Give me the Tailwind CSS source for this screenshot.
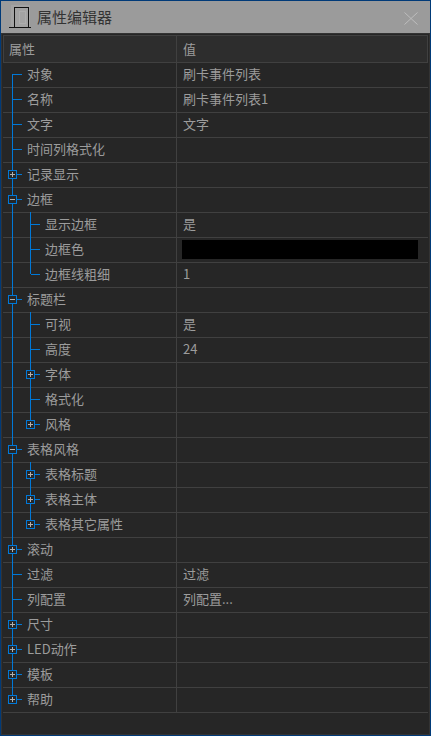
<!DOCTYPE html>
<html lang="zh-CN">
<head>
    <meta charset="UTF-8">
    <title>属性编辑器</title>
    <script src="https://cdn.jsdelivr.net/npm/@tailwindcss/browser@4"></script>
</head>
<body class="bg-[#262626] overflow-hidden">
    <div class="w-[431px] h-[736px] border border-[#003a78] flex flex-col text-[13px] text-[#9c9c9c] font-['Noto_Sans_CJK_SC','Liberation_Sans',sans-serif]">
        <header class="h-[32px] shrink-0 bg-[#9b9b9b] flex items-center justify-between pl-[8px] pr-[12px]">
            <div class="flex items-center gap-[4px]">
                <svg width="24" height="24" viewBox="0 0 24 24" fill="none" shape-rendering="crispEdges">
                    <rect x="2" y="0" width="19" height="22" fill="#a3a3a3"/>
                    <rect x="10.5" y="6.5" width="6" height="12" stroke="#adadad"/>
                    <path d="M5.5 22V2.5H19.5V22" stroke="#111"/>
                    <path d="M0 22.5H22" stroke="#111"/>
                </svg>
                <span class="text-[15px] text-[#333]">属性编辑器</span>
            </div>
            <svg class="mt-[3px]" width="14" height="13" viewBox="0 0 14 13" fill="none"><path d="M0.5 0.5L13.5 12.5M13.5 0.5L0.5 12.5" stroke="#bdbdbd"/></svg>
        </header>

        <main class="relative flex-1 bg-[#262626] border border-[#333] pl-[1px] pr-[1px] pt-[1px]">
            <div class="flex h-[28px] bg-[#2d2d2d] border border-[#404040] items-center">
                <div class="w-[173px] h-full border-r border-[#404040] pl-[5px] flex items-center">属性</div>
                <div class="flex-1 pl-[6px]">值</div>
            </div>

            <div class="flex flex-col">
                <div class="flex h-[25px] border-b border-[#404040]"><div class="w-[174px] border-r border-[#404040] pl-[24px] pb-[2px] flex items-center">对象</div><div class="flex-1 pl-[6px] pb-[2px] flex items-center">刷卡事件列表</div></div>
                <div class="flex h-[25px] border-b border-[#404040]"><div class="w-[174px] border-r border-[#404040] pl-[24px] pb-[2px] flex items-center">名称</div><div class="flex-1 pl-[6px] pb-[2px] flex items-center">刷卡事件列表1</div></div>
                <div class="flex h-[25px] border-b border-[#404040]"><div class="w-[174px] border-r border-[#404040] pl-[24px] pb-[2px] flex items-center">文字</div><div class="flex-1 pl-[6px] pb-[2px] flex items-center">文字</div></div>
                <div class="flex h-[25px] border-b border-[#404040]"><div class="w-[174px] border-r border-[#404040] pl-[24px] pb-[2px] flex items-center">时间列格式化</div><div class="flex-1"></div></div>
                <div class="flex h-[25px] border-b border-[#404040]"><div class="w-[174px] border-r border-[#404040] pl-[24px] pb-[2px] flex items-center">记录显示</div><div class="flex-1"></div></div>
                <div class="flex h-[25px] border-b border-[#404040]"><div class="w-[174px] border-r border-[#404040] pl-[24px] pb-[2px] flex items-center">边框</div><div class="flex-1"></div></div>
                <div class="flex h-[25px] border-b border-[#404040]"><div class="w-[174px] border-r border-[#404040] pl-[42px] pb-[2px] flex items-center">显示边框</div><div class="flex-1 pl-[6px] pb-[2px] flex items-center">是</div></div>
                <div class="flex h-[25px] border-b border-[#404040]"><div class="w-[174px] border-r border-[#404040] pl-[42px] pb-[2px] flex items-center">边框色</div><div class="flex-1 pl-[5px] pr-[10px] pb-[2px] flex items-center"><div class="w-full h-[19px] bg-black"></div></div></div>
                <div class="flex h-[25px] border-b border-[#404040]"><div class="w-[174px] border-r border-[#404040] pl-[42px] pb-[2px] flex items-center">边框线粗细</div><div class="flex-1 pl-[6px] pb-[2px] flex items-center">1</div></div>
                <div class="flex h-[25px] border-b border-[#404040]"><div class="w-[174px] border-r border-[#404040] pl-[24px] pb-[2px] flex items-center">标题栏</div><div class="flex-1"></div></div>
                <div class="flex h-[25px] border-b border-[#404040]"><div class="w-[174px] border-r border-[#404040] pl-[42px] pb-[2px] flex items-center">可视</div><div class="flex-1 pl-[6px] pb-[2px] flex items-center">是</div></div>
                <div class="flex h-[25px] border-b border-[#404040]"><div class="w-[174px] border-r border-[#404040] pl-[42px] pb-[2px] flex items-center">高度</div><div class="flex-1 pl-[6px] pb-[2px] flex items-center">24</div></div>
                <div class="flex h-[25px] border-b border-[#404040]"><div class="w-[174px] border-r border-[#404040] pl-[42px] pb-[2px] flex items-center">字体</div><div class="flex-1"></div></div>
                <div class="flex h-[25px] border-b border-[#404040]"><div class="w-[174px] border-r border-[#404040] pl-[42px] pb-[2px] flex items-center">格式化</div><div class="flex-1"></div></div>
                <div class="flex h-[25px] border-b border-[#404040]"><div class="w-[174px] border-r border-[#404040] pl-[42px] pb-[2px] flex items-center">风格</div><div class="flex-1"></div></div>
                <div class="flex h-[25px] border-b border-[#404040]"><div class="w-[174px] border-r border-[#404040] pl-[24px] pb-[2px] flex items-center">表格风格</div><div class="flex-1"></div></div>
                <div class="flex h-[25px] border-b border-[#404040]"><div class="w-[174px] border-r border-[#404040] pl-[42px] pb-[2px] flex items-center">表格标题</div><div class="flex-1"></div></div>
                <div class="flex h-[25px] border-b border-[#404040]"><div class="w-[174px] border-r border-[#404040] pl-[42px] pb-[2px] flex items-center">表格主体</div><div class="flex-1"></div></div>
                <div class="flex h-[25px] border-b border-[#404040]"><div class="w-[174px] border-r border-[#404040] pl-[42px] pb-[2px] flex items-center">表格其它属性</div><div class="flex-1"></div></div>
                <div class="flex h-[25px] border-b border-[#404040]"><div class="w-[174px] border-r border-[#404040] pl-[24px] pb-[2px] flex items-center">滚动</div><div class="flex-1"></div></div>
                <div class="flex h-[25px] border-b border-[#404040]"><div class="w-[174px] border-r border-[#404040] pl-[24px] pb-[2px] flex items-center">过滤</div><div class="flex-1 pl-[6px] pb-[2px] flex items-center">过滤</div></div>
                <div class="flex h-[25px] border-b border-[#404040]"><div class="w-[174px] border-r border-[#404040] pl-[24px] pb-[2px] flex items-center">列配置</div><div class="flex-1 pl-[6px] pb-[2px] flex items-center">列配置...</div></div>
                <div class="flex h-[25px] border-b border-[#404040]"><div class="w-[174px] border-r border-[#404040] pl-[24px] pb-[2px] flex items-center">尺寸</div><div class="flex-1"></div></div>
                <div class="flex h-[25px] border-b border-[#404040]"><div class="w-[174px] border-r border-[#404040] pl-[24px] pb-[2px] flex items-center">LED动作</div><div class="flex-1"></div></div>
                <div class="flex h-[25px] border-b border-[#404040]"><div class="w-[174px] border-r border-[#404040] pl-[24px] pb-[2px] flex items-center">模板</div><div class="flex-1"></div></div>
                <div class="flex h-[25px] border-b border-[#404040]"><div class="w-[174px] border-r border-[#404040] pl-[24px] pb-[2px] flex items-center">帮助</div><div class="flex-1"></div></div>
            </div>

            <!-- tree guide lines over the name column -->
            <svg class="absolute left-0 top-0 pointer-events-none" width="60" height="700" viewBox="2 35 60 700" fill="none" shape-rendering="crispEdges">
                <g stroke="#0078d7">
                    <path d="M12.5 75V700M12.5 75.5H22M12.5 100.5H22M12.5 125.5H22M12.5 150.5H22M12.5 175.5H22M12.5 200.5H22M12.5 300.5H22M12.5 450.5H22M12.5 550.5H22M12.5 575.5H22M12.5 600.5H22M12.5 625.5H22M12.5 650.5H22M12.5 675.5H22M12.5 700.5H22"/>
                    <path d="M30.5 213V275M30.5 225.5H40M30.5 250.5H40M30.5 275.5H40"/>
                    <path d="M30.5 313V425M30.5 325.5H40M30.5 350.5H40M30.5 375.5H40M30.5 400.5H40M30.5 425.5H40"/>
                    <path d="M30.5 463V525M30.5 475.5H40M30.5 500.5H40M30.5 525.5H40"/>
                </g>
                <g stroke="#0078d7" fill="#262626">
                    <rect x="8.5" y="171.5" width="8" height="8"/>
                    <rect x="8.5" y="196.5" width="8" height="8"/>
                    <rect x="8.5" y="296.5" width="8" height="8"/>
                    <rect x="8.5" y="446.5" width="8" height="8"/>
                    <rect x="8.5" y="546.5" width="8" height="8"/>
                    <rect x="8.5" y="621.5" width="8" height="8"/>
                    <rect x="8.5" y="646.5" width="8" height="8"/>
                    <rect x="8.5" y="671.5" width="8" height="8"/>
                    <rect x="8.5" y="696.5" width="8" height="8"/>
                    <rect x="26.5" y="371.5" width="8" height="8"/>
                    <rect x="26.5" y="421.5" width="8" height="8"/>
                    <rect x="26.5" y="471.5" width="8" height="8"/>
                    <rect x="26.5" y="496.5" width="8" height="8"/>
                    <rect x="26.5" y="521.5" width="8" height="8"/>
                </g>
                <path stroke="#b0b0b0" d="M10 175.5H15M12.5 173V178M10 200.5H15M10 300.5H15M10 450.5H15M10 550.5H15M12.5 548V553M10 625.5H15M12.5 623V628M10 650.5H15M12.5 648V653M10 675.5H15M12.5 673V678M10 700.5H15M12.5 698V703M28 375.5H33M30.5 373V378M28 425.5H33M30.5 423V428M28 475.5H33M30.5 473V478M28 500.5H33M30.5 498V503M28 525.5H33M30.5 523V528"/>
            </svg>
        </main>
    </div>
</body>
</html>
